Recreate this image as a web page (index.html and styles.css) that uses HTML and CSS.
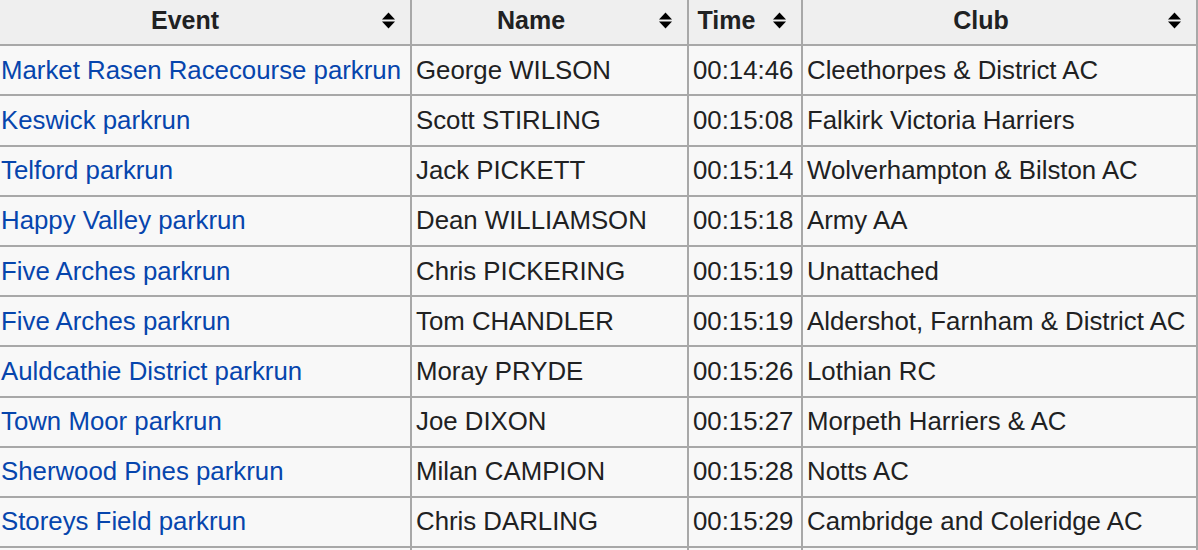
FILE: index.html
```html
<!DOCTYPE html>
<html lang="en">
<head>
<meta charset="utf-8">
<title>Fastest parkrun times</title>
<link rel="stylesheet" href="styles.css">
</head>
<body>
<table class="results">
  <colgroup>
    <col class="col-event">
    <col class="col-name">
    <col class="col-time">
    <col class="col-club">
  </colgroup>
  <thead>
    <tr>
      <th class="sortable"><span class="label">Event</span><svg class="sort-icon" viewBox="0 0 15 17" aria-hidden="true"><path d="M7.5 0.5 L14 7.6 L1 7.6 Z"/><path d="M1 9.4 L14 9.4 L7.5 16.5 Z"/></svg></th>
      <th class="sortable"><span class="label">Name</span><svg class="sort-icon" viewBox="0 0 15 17" aria-hidden="true"><path d="M7.5 0.5 L14 7.6 L1 7.6 Z"/><path d="M1 9.4 L14 9.4 L7.5 16.5 Z"/></svg></th>
      <th class="sortable"><span class="label">Time</span><svg class="sort-icon" viewBox="0 0 15 17" aria-hidden="true"><path d="M7.5 0.5 L14 7.6 L1 7.6 Z"/><path d="M1 9.4 L14 9.4 L7.5 16.5 Z"/></svg></th>
      <th class="sortable"><span class="label">Club</span><svg class="sort-icon" viewBox="0 0 15 17" aria-hidden="true"><path d="M7.5 0.5 L14 7.6 L1 7.6 Z"/><path d="M1 9.4 L14 9.4 L7.5 16.5 Z"/></svg></th>
    </tr>
  </thead>
  <tbody>
    <tr><td><a href="#">Market Rasen Racecourse parkrun</a></td><td>George WILSON</td><td>00:14:46</td><td>Cleethorpes &amp; District AC</td></tr>
    <tr><td><a href="#">Keswick parkrun</a></td><td>Scott STIRLING</td><td>00:15:08</td><td>Falkirk Victoria Harriers</td></tr>
    <tr><td><a href="#">Telford parkrun</a></td><td>Jack PICKETT</td><td>00:15:14</td><td>Wolverhampton &amp; Bilston AC</td></tr>
    <tr><td><a href="#">Happy Valley parkrun</a></td><td>Dean WILLIAMSON</td><td>00:15:18</td><td>Army AA</td></tr>
    <tr><td><a href="#">Five Arches parkrun</a></td><td>Chris PICKERING</td><td>00:15:19</td><td>Unattached</td></tr>
    <tr><td><a href="#">Five Arches parkrun</a></td><td>Tom CHANDLER</td><td>00:15:19</td><td>Aldershot, Farnham &amp; District AC</td></tr>
    <tr><td><a href="#">Auldcathie District parkrun</a></td><td>Moray PRYDE</td><td>00:15:26</td><td>Lothian RC</td></tr>
    <tr><td><a href="#">Town Moor parkrun</a></td><td>Joe DIXON</td><td>00:15:27</td><td>Morpeth Harriers &amp; AC</td></tr>
    <tr><td><a href="#">Sherwood Pines parkrun</a></td><td>Milan CAMPION</td><td>00:15:28</td><td>Notts AC</td></tr>
    <tr><td><a href="#">Storeys Field parkrun</a></td><td>Chris DARLING</td><td>00:15:29</td><td>Cambridge and Coleridge AC</td></tr>
    <tr class="next-row"><td></td><td></td><td></td><td></td></tr>
  </tbody>
</table>
</body>
</html>
```

FILE: styles.css
```css
html, body {
  margin: 0;
  padding: 0;
  background: #ffffff;
}

body {
  font-family: "Liberation Sans", Arial, Helvetica, sans-serif;
  color: #202122;
  overflow: hidden;
}

.results {
  border-collapse: collapse;
  table-layout: fixed;
  width: 1201px;
  margin: -6px 0 0 -5px;
  background: #f8f8f8;
  border: 2px solid #a8a8a8;
}

.col-event { width: 415px; }
.col-name  { width: 277px; }
.col-time  { width: 114px; }
.col-club  { width: 395px; }

.results th,
.results td {
  border: 2px solid #a8a8a8;
  height: 48.2px;
  vertical-align: middle;
  white-space: nowrap;
}

.results th {
  position: relative;
  background: #efefef;
  font-size: 25px;
  font-weight: bold;
  text-align: center;
  padding: 0 42px 0 5px;
}

.results td {
  font-size: 25.8px;
  padding: 0 4px;
  text-align: left;
}

.results a {
  color: #0645ad;
  text-decoration: none;
}

.sort-icon {
  position: absolute;
  right: 14px;
  top: 50%;
  width: 15px;
  height: 17px;
  margin-top: -8.5px;
  fill: #000000;
}
```
